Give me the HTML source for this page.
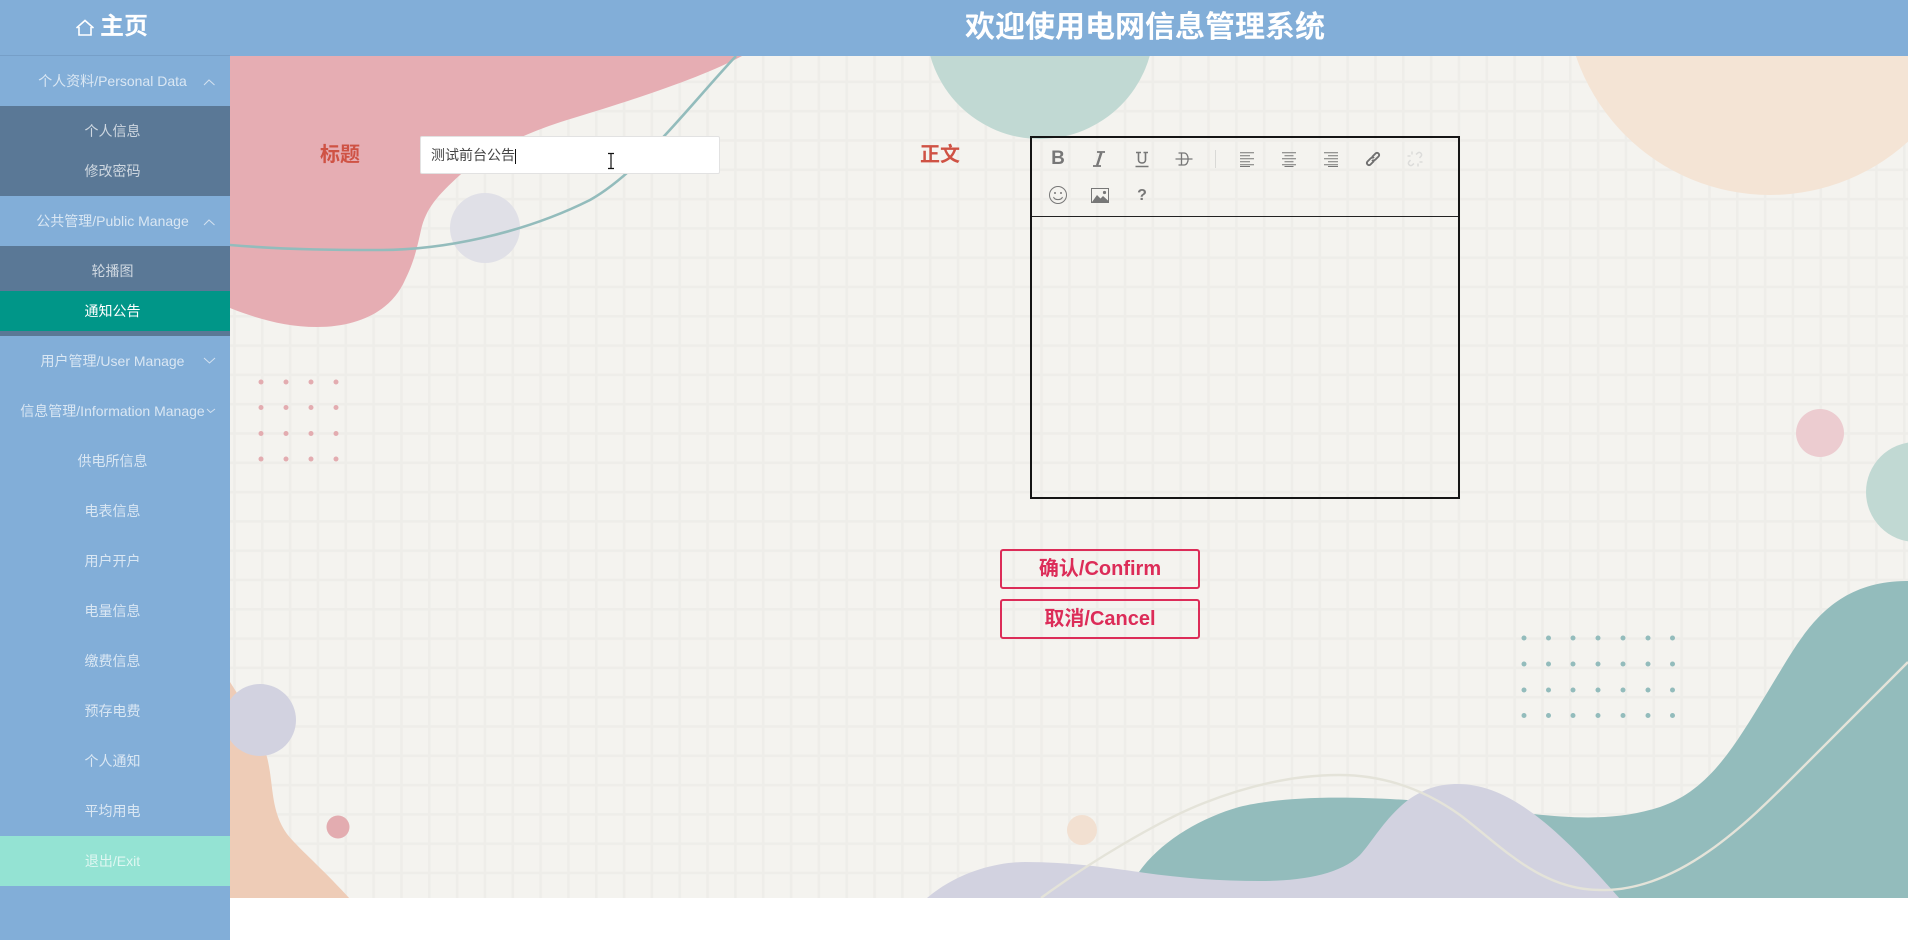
<!DOCTYPE html>
<html lang="zh"><head><meta charset="utf-8"><title>电网信息管理系统</title>
<style>
*{box-sizing:border-box;margin:0;padding:0}
html,body{width:1908px;height:940px;overflow:hidden;background:#fff;font-family:"Liberation Sans","Noto Sans CJK SC",sans-serif}
.abs{position:absolute}
#bg{position:absolute;left:0;top:0}
#header{position:absolute;left:0;top:0;width:1908px;height:56px;background:#82aed8}
#title{position:absolute;left:965px;top:8px;line-height:40px;font-size:30px;font-weight:700;color:#fff;white-space:nowrap}
#home{position:absolute;left:100px;top:7px;line-height:40px;font-size:24px;font-weight:700;color:#fff}
#side{position:absolute;left:0;top:56px;width:230px;height:884px;background:#82aed8;font-size:14px;color:rgba(255,255,255,.7);text-align:center}
#side div{width:225px;white-space:nowrap}
.r{height:50px;line-height:50px;width:230px!important;padding-right:5px}
.r span,.s span{display:block;width:225px}
.sub{width:230px!important;background:#5a7896;padding:5px 0}
.s{height:40px;line-height:40px;width:230px!important}
.s span{width:225px}
.on{background:#009688;color:#fff}
.exit{background:#94e3d3}
.lab{position:absolute;font-size:20px;font-weight:700;color:#cf5244;line-height:30px;white-space:nowrap}
#inp{position:absolute;left:420px;top:136px;width:300px;height:38px;background:#fff;border:1px solid #e2e2e2;font-size:14px;line-height:37px;padding-left:10px;color:#444;border-radius:2px}
#ed{position:absolute;left:1030px;top:136px;width:430px;height:363px;border:2px solid #151515}
#ed .bar{position:absolute;left:0;top:78px;width:426px;height:1px;background:#222}
.btn{position:absolute;left:1000px;width:200px;height:40px;border:2px solid #dc2c58;border-radius:3px;color:#dc2c58;font-size:20px;font-weight:700;line-height:37px;text-align:center;white-space:nowrap}
.ic{position:absolute;color:#777;font-weight:700;line-height:20px;text-align:center;width:24px}
</style></head><body>
<svg id="bg" width="1908" height="940" viewBox="0 0 1908 940" xmlns="http://www.w3.org/2000/svg">
<defs>
<pattern id="g" width="27.83" height="29.3" patternUnits="userSpaceOnUse" x="261" y="22">
<rect x="0" y="0" width="27.83" height="2.6" fill="#eeede9"/>
<rect x="0" y="0" width="2.6" height="29.3" fill="#eeede9"/>
</pattern>
<clipPath id="c"><rect x="230" y="56" width="1678" height="842"/></clipPath>
</defs>
<g clip-path="url(#c)">
<rect x="230" y="56" width="1678" height="842" fill="#f4f3ef"/>
<rect x="230" y="56" width="1678" height="842" fill="url(#g)"/>
<circle cx="1040" cy="25" r="114" fill="#c1d9d3"/>
<circle cx="1770" cy="-10" r="205" fill="#f4e4d5"/>
<circle cx="1820" cy="433" r="24" fill="#ecccd0"/>
<circle cx="1916" cy="492" r="50" fill="#c1d9d3"/>
<path d="M230 56H742C705 76 640 98 567 120C525 133 485 152 460 175C438 195 426 208 421 230C417 248 414 262 405 280C392 310 360 327 317 327C285 327 255 318 230 308Z" fill="#e6adb3"/>
<circle cx="485" cy="228" r="35" fill="#e0e0e7"/>
<path d="M230 245C290 250 340 250 380 250C440 250 520 235 590 200C640 172 690 105 736 56" fill="none" stroke="#93bcbc" stroke-width="2.6"/>
<path d="M1139 872C1160 842 1200 818 1239 807C1275 798 1330 795 1407 800L1533 814C1580 819 1620 820 1660 807C1710 790 1735 745 1767 693C1800 640 1825 581 1908 581V898H1139Z" fill="#93bcbc"/>
<path d="M927 898C960 870 1000 862 1025 862C1070 862 1110 868 1139 872C1180 878 1220 881 1260 881C1300 881 1340 875 1360 855C1372 842 1385 818 1408 800C1425 788 1440 784 1458 784C1510 784 1560 830 1620 899Z" fill="#d2d2e0"/>
<path d="M1041 898C1090 862 1160 820 1204 803C1250 785 1295 775 1339 775C1385 775 1425 790 1460 815C1500 845 1540 890 1600 890C1680 892 1750 820 1800 770C1840 730 1875 695 1908 662" fill="none" stroke="#e4e3d9" stroke-width="2.4"/>
<path d="M230 682C245 705 258 730 267 757C274 785 270 810 287 834C300 850 320 866 350 899H230Z" fill="#eeccb7"/>
<circle cx="260" cy="720" r="36" fill="#d2d2e0"/>
<circle cx="338" cy="827" r="11.5" fill="#e3acb0"/>
<circle cx="1082" cy="830" r="15" fill="#f2e0d1"/>
<g fill="#e3acb0">
<circle cx="261" cy="382" r="2.5"/><circle cx="286" cy="382" r="2.5"/><circle cx="311" cy="382" r="2.5"/><circle cx="336" cy="382" r="2.5"/>
<circle cx="261" cy="407.5" r="2.5"/><circle cx="286" cy="407.5" r="2.5"/><circle cx="311" cy="407.5" r="2.5"/><circle cx="336" cy="407.5" r="2.5"/>
<circle cx="261" cy="433.5" r="2.5"/><circle cx="286" cy="433.5" r="2.5"/><circle cx="311" cy="433.5" r="2.5"/><circle cx="336" cy="433.5" r="2.5"/>
<circle cx="261" cy="459" r="2.5"/><circle cx="286" cy="459" r="2.5"/><circle cx="311" cy="459" r="2.5"/><circle cx="336" cy="459" r="2.5"/>
</g>
<g fill="#93bcbc">
<circle cx="1524" cy="638" r="2.5"/><circle cx="1548.5" cy="638" r="2.5"/><circle cx="1573" cy="638" r="2.5"/><circle cx="1598" cy="638" r="2.5"/><circle cx="1623" cy="638" r="2.5"/><circle cx="1648" cy="638" r="2.5"/><circle cx="1672.5" cy="638" r="2.5"/>
<circle cx="1524" cy="664" r="2.5"/><circle cx="1548.5" cy="664" r="2.5"/><circle cx="1573" cy="664" r="2.5"/><circle cx="1598" cy="664" r="2.5"/><circle cx="1623" cy="664" r="2.5"/><circle cx="1648" cy="664" r="2.5"/><circle cx="1672.5" cy="664" r="2.5"/>
<circle cx="1524" cy="690" r="2.5"/><circle cx="1548.5" cy="690" r="2.5"/><circle cx="1573" cy="690" r="2.5"/><circle cx="1598" cy="690" r="2.5"/><circle cx="1623" cy="690" r="2.5"/><circle cx="1648" cy="690" r="2.5"/><circle cx="1672.5" cy="690" r="2.5"/>
<circle cx="1524" cy="715.5" r="2.5"/><circle cx="1548.5" cy="715.5" r="2.5"/><circle cx="1573" cy="715.5" r="2.5"/><circle cx="1598" cy="715.5" r="2.5"/><circle cx="1623" cy="715.5" r="2.5"/><circle cx="1648" cy="715.5" r="2.5"/><circle cx="1672.5" cy="715.5" r="2.5"/>
</g>
</g>
</svg>

<div id="header">
<div id="title">欢迎使用电网信息管理系统</div>
<div id="home">主页</div>
<svg class="abs" style="left:74px;top:18px" width="22" height="20" viewBox="0 0 22 20"><path d="M2.5 10L11 2.5 19.5 10M5 9V17H17V9" fill="none" stroke="#fff" stroke-width="1.6"/></svg>
</div>
<div class="abs" style="left:0;top:55px;width:230px;height:1px;background:#769fc8"></div>

<div id="side">
<div class="r"><span>个人资料/Personal Data</span></div>
<div class="sub"><div class="s"><span>个人信息</span></div><div class="s"><span>修改密码</span></div></div>
<div class="r"><span>公共管理/Public Manage</span></div>
<div class="sub"><div class="s"><span>轮播图</span></div><div class="s on"><span>通知公告</span></div></div>
<div class="r"><span>用户管理/User Manage</span></div>
<div class="r"><span>信息管理/Information Manage</span></div>
<div class="r"><span>供电所信息</span></div>
<div class="r"><span>电表信息</span></div>
<div class="r"><span>用户开户</span></div>
<div class="r"><span>电量信息</span></div>
<div class="r"><span>缴费信息</span></div>
<div class="r"><span>预存电费</span></div>
<div class="r"><span>个人通知</span></div>
<div class="r"><span>平均用电</span></div>
<div class="r exit"><span>退出/Exit</span></div>
</div>

<svg class="abs" style="left:0;top:0" width="230" height="440" viewBox="0 0 230 440">
<g fill="none" stroke="#d3e1f0" stroke-width="1">
<path d="M204 85L209 80 214.5 85"/>
<path d="M204 225L209 220 214.5 225"/>
<path d="M204 358L209.5 363 215 358"/>
<path d="M207 409L210.5 412.5 215 409"/>
</g>
</svg>

<div class="lab" style="left:320px;top:140px">标题</div>
<div class="lab" style="left:920px;top:140px">正文</div>

<div id="inp">测试前台公告</div>
<div class="abs" style="left:515px;top:149px;width:1px;height:15px;background:#111"></div>
<svg class="abs" style="left:606px;top:152px" width="10" height="18" viewBox="0 0 10 18"><path d="M2 1.5H8M5 1.5V16.5M2 16.5H8" fill="none" stroke="#111" stroke-width="1.2"/></svg>

<div id="ed"><div class="bar"></div></div>

<div class="ic" style="left:1046px;top:149px;font-size:19px;">B</div>
<svg class="abs" style="left:1092px;top:151px" width="14" height="16" viewBox="0 0 14 16"><path d="M5 1H13M1 15H9M9 1L5 15" fill="none" stroke="#777" stroke-width="1.8"/><path d="M8 2L10.5 2 6.5 14 4 14Z" fill="#777"/></svg>
<svg class="abs" style="left:1133px;top:150px" width="18" height="19" viewBox="0 0 18 19"><path d="M3 2.5H8M10.5 2.5H15M5.5 2.5V10C5.5 14 12.5 14 12.5 10V2.5M2.5 16.5H15.5" fill="none" stroke="#777" stroke-width="1.6"/></svg>
<svg class="abs" style="left:1175px;top:151px" width="18" height="16" viewBox="0 0 18 16"><path d="M3.5 2H9C14.5 2 14.5 14 9 14H3.5M6.5 2V14M0.5 8H17.5" fill="none" stroke="#777" stroke-width="1.3"/></svg>
<div class="abs" style="left:1215px;top:150px;width:1px;height:18px;background:#d9d9d6"></div>
<svg class="abs" style="left:1240px;top:152px" width="15" height="15" viewBox="0 0 15 15"><path d="M0 .7H14M0 3.7H10M0 6.7H14M0 9.7H10M0 12.7H14M0 14.5H10" stroke="#777" stroke-width="1" fill="none"/></svg>
<svg class="abs" style="left:1282px;top:152px" width="15" height="15" viewBox="0 0 15 15"><path d="M0 .7H14M2.5 3.7H11.5M0 6.7H14M2.5 9.7H11.5M0 12.7H14M2.5 14.5H11.5" stroke="#777" stroke-width="1" fill="none"/></svg>
<svg class="abs" style="left:1324px;top:152px" width="15" height="15" viewBox="0 0 15 15"><path d="M0 .7H14M4 3.7H14M0 6.7H14M4 9.7H14M0 12.7H14M4 14.5H14" stroke="#777" stroke-width="1" fill="none"/></svg>
<svg class="abs" style="left:1365px;top:151px" width="16" height="16" viewBox="0 0 16 16"><g fill="none" stroke="#6f6f6f" stroke-width="1.9"><path d="M7 6L10.5 2.5C12.5 .5 15.5 3.5 13.5 5.5L10.5 8.5C9 10 7.5 9.5 7 9"/><path d="M9 10L5.5 13.5C3.5 15.5 .5 12.5 2.5 10.5L5.5 7.5C7 6 8.5 6.5 9 7"/></g></svg>
<svg class="abs" style="left:1407px;top:151px" width="16" height="16" viewBox="0 0 16 16"><g fill="none" stroke="#dcdcda" stroke-width="1.5"><path d="M9 3.5L11 1.8C13 .5 15.5 3 14.2 5L12.5 7M7 12.5L5 14.2C3 15.5 .5 13 1.8 11L3.5 9"/><path d="M5 .5V3.5M.5 5H3.5M11 12.5V15.5M12.5 11H15.5"/></g></svg>

<svg class="abs" style="left:1048px;top:185px" width="20" height="20" viewBox="0 0 20 20"><circle cx="10" cy="10" r="8.5" fill="none" stroke="#777" stroke-width="1"/><circle cx="7" cy="8" r="1" fill="#777"/><circle cx="13" cy="8" r="1" fill="#777"/><path d="M5.5 12C7 15.5 13 15.5 14.5 12" fill="none" stroke="#777" stroke-width="1"/></svg>
<svg class="abs" style="left:1091px;top:188px" width="18" height="15" viewBox="0 0 18 15"><rect x=".5" y=".5" width="17" height="14" fill="#f4f3ef" stroke="#777"/><path d="M1 14L6 7 9.5 10.5 12 8 17 12.5V14.5H1Z" fill="#777"/><circle cx="13.5" cy="4.5" r="1.6" fill="#777"/></svg>
<div class="ic" style="left:1130px;top:186px;font-size:16px;">?</div>

<div class="btn" style="top:549px">确认/Confirm</div>
<div class="btn" style="top:599px">取消/Cancel</div>
</body></html>
